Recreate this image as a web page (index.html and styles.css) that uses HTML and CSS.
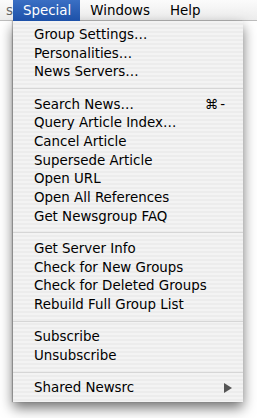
FILE: index.html
```html
<!DOCTYPE html>
<html lang="en">
<head>
  <meta charset="UTF-8">
  <title>Special Menu</title>
  <link rel="stylesheet" href="styles.css">
</head>
<body>
  <!-- Menu Bar -->
  <div class="menubar">
    <span class="menubar-item cut">s</span>
    <span class="menubar-item active">Special</span>
    <span class="menubar-item">Windows</span>
    <span class="menubar-item">Help</span>
  </div>

  <!-- Special Menu -->
  <div class="menu">
    <div class="menu-item">Group Settings…</div>
    <div class="menu-item">Personalities…</div>
    <div class="menu-item">News Servers…</div>
    <div class="separator"></div>
    <div class="menu-item">Search News… <span class="shortcut">⌘-</span></div>
    <div class="menu-item">Query Article Index…</div>
    <div class="menu-item">Cancel Article</div>
    <div class="menu-item">Supersede Article</div>
    <div class="menu-item">Open URL</div>
    <div class="menu-item">Open All References</div>
    <div class="menu-item">Get Newsgroup FAQ</div>
    <div class="separator"></div>
    <div class="menu-item">Get Server Info</div>
    <div class="menu-item">Check for New Groups</div>
    <div class="menu-item">Check for Deleted Groups</div>
    <div class="menu-item">Rebuild Full Group List</div>
    <div class="separator"></div>
    <div class="menu-item">Subscribe</div>
    <div class="menu-item">Unsubscribe</div>
    <div class="separator"></div>
    <div class="menu-item">Shared Newsrc <span class="submenu-arrow"></span></div>
  </div>
</body>
</html>
```

FILE: styles.css
```css
/* Aqua menu colours */
:root {
  --text: #000000;
  --highlight-top: #3a6fc4;
  --highlight-bottom: #1d51a8;
  --separator: #d6d6d6;
  --menu-light: #f3f3f3;
  --menu-dark: #ececec;
}

body {
  margin: 0;
  background: #ffffff;
  font-family: 'DejaVu Sans', 'Liberation Sans', sans-serif;
  font-size: 13.4px;
  color: var(--text);
  width: 257px;
  height: 418px;
  overflow: hidden;
}

/* Menu Bar */
.menubar {
  display: flex;
  height: 21px;
  background: linear-gradient(to bottom, #fbfbfb 0%, #ececec 100%);
  border-bottom: 1px solid #bdbdbd;
  box-sizing: border-box;
}

.menubar-item {
  display: flex;
  align-items: center;
  padding: 0 10px;
  font-size: 13.4px;
}

.menubar-item.cut {
  width: 13px;
  padding: 0;
  justify-content: flex-end;
  color: #666;
  overflow: hidden;
}

.menubar-item.active {
  background: linear-gradient(to bottom, var(--highlight-top), var(--highlight-bottom));
  color: #ffffff;
  height: 21px;
  padding: 0 9px 0 10px;
}

/* Dropdown Menu */
.menu {
  width: 230px;
  margin-left: 13px;
  padding: 5px 0 4px;
  box-sizing: border-box;
  background-color: var(--menu-light);
  background-image: repeating-linear-gradient(
    to bottom,
    var(--menu-light) 0px,
    var(--menu-light) 2px,
    var(--menu-dark) 2px,
    var(--menu-dark) 4px
  );
  box-shadow: 0 6px 12px rgba(0, 0, 0, 0.55), -1px 0 1px rgba(0, 0, 0, 0.25);
}

.menu-item {
  display: flex;
  align-items: center;
  justify-content: space-between;
  height: 18.7px;
  line-height: 18.7px;
  padding: 0 11px 0 21px;
  white-space: nowrap;
}

.shortcut {
  padding-right: 5px;
  letter-spacing: 2px;
}

.submenu-arrow {
  width: 0;
  height: 0;
  border-top: 5px solid transparent;
  border-bottom: 5px solid transparent;
  border-left: 8px solid #555555;
}

.separator {
  height: 1px;
  margin: 6px 0 6.5px;
  background-color: var(--separator);
}
```
